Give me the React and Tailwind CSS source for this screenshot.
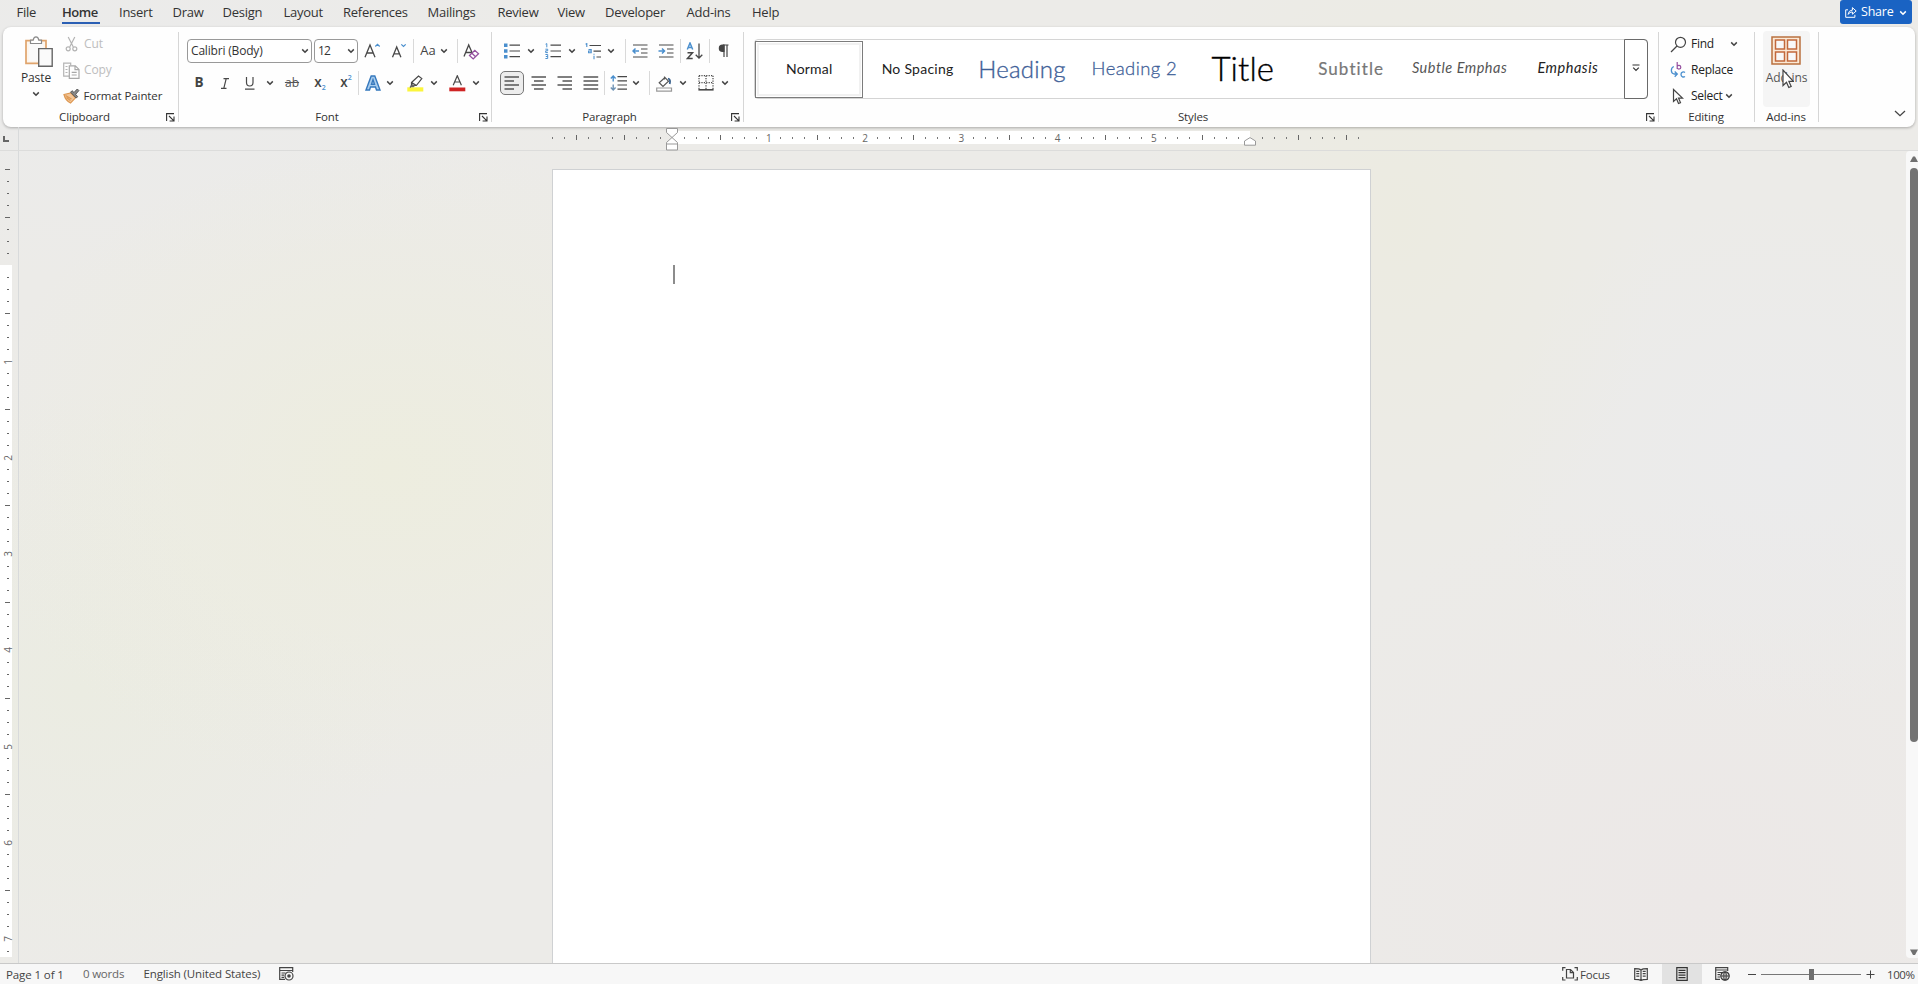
import React from "react";

const INK = "#484848";
const BLUE = "#4a8fce";

function Svg({ w, h, children, className = "" }) {
  return (
    <svg width={w} height={h} viewBox={`0 0 ${w} ${h}`} fill="none" stroke={INK} strokeWidth="1.2" className={`shrink-0 ${className}`}>
      {children}
    </svg>
  );
}

const Chev = ({ color = "#444", className = "" }) => (
  <Svg w={8} h={6} className={className}>
    <path d="M1.2 1.4 4 4.2 6.8 1.4" stroke={color} strokeWidth="1.5" />
  </Svg>
);

const Cell = ({ c = "", children }) => <div className={`flex h-6 shrink-0 items-center justify-center ${c}`}>{children}</div>;
const Sep = ({ c = "" }) => <div className={`h-6 w-px shrink-0 bg-[#d9d9d9] ${c}`} />;
const Row = ({ c = "", children }) => <div className={`flex h-8 items-center ${c}`}>{children}</div>;

const Launcher = () => (
  <Svg w={9} h={9}>
    <path d="M.6 8V.6H8M3 3l4.4 4.4M8 3.6V8H3.6" stroke="#333" strokeWidth="1.1" />
  </Svg>
);

function Group({ c, label, launcher, labelClass = "", children }) {
  return (
    <section className={`flex h-[90px] shrink-0 flex-col border-r border-[#d6d6d6] ${c}`}>
      <div className="h-[78px] shrink-0">{children}</div>
      <div className={`flex h-[14px] shrink-0 items-center ${launcher ? "pr-[3px]" : ""}`}>
        <div className={`flex-1 text-center text-[11.5px] leading-[14px] tracking-[-0.15px] text-[#333] ${labelClass}`}>{label}</div>
        {launcher && <Launcher />}
      </div>
    </section>
  );
}

const TABS = [
  ["File", "w-[45.5px]"],
  ["Home", "w-[57px]"],
  ["Insert", "w-[53.5px]"],
  ["Draw", "w-[50px]"],
  ["Design", "w-[61px]"],
  ["Layout", "w-[59.5px]"],
  ["References", "w-[84.5px]"],
  ["Mailings", "w-[70px]"],
  ["Review", "w-[60px]"],
  ["View", "w-[47.5px]"],
  ["Developer", "w-[81.5px]"],
  ["Add-ins", "w-[65.5px]"],
  ["Help", "w-[40px]"],
];

function TabBar() {
  return (
    <nav className="flex h-[27px] shrink-0 items-start justify-between pl-[16.500px] pr-[6.500px]">
      <div className="flex text-[13px] leading-[24px] tracking-[-0.25px] text-[#333]">
        {TABS.map(([name, w]) => (
          <div key={name} className={`shrink-0 whitespace-nowrap ${w}`}>
            {name === "Home" ? (
              <span className="flex h-6 w-[37.5px] flex-col border-b-2 border-[#2b5fb4] font-semibold tracking-[-0.45px]">{name}</span>
            ) : (
              name
            )}
          </div>
        ))}
      </div>
      <button className="flex h-6 w-[72px] items-center rounded-[3px] bg-[#1a63c3] pl-[5px] text-[12.5px] leading-6 tracking-[-0.2px] text-white">
        <Svg w={12} h={12}>
          <path d="M3 3.8H.7v7.5h9.2V8.8M3.2 8.4C3.5 5.6 5 4.3 7.4 4.2V1.6L11.2 5 7.4 8.2V6C5.500 6 4.300 6.700 3.200 8.400Z" stroke="#fff" strokeWidth="1" />
        </Svg>
        <span className="ml-[4.500px] mr-[5.500px]">Share</span>
        <Chev color="#fff" className="mt-px" />
      </button>
    </nav>
  );
}

function Clipboard() {
  return (
    <Group c="w-[176px]" label="Clipboard" launcher>
      <div className="flex">
        <div className="flex w-[60px] flex-col items-center pl-[6px] pt-[4px] text-[12px] text-[#333]">
          <Svg w={28} h={31} className="ml-[5px]">
            <path d="M1 4.700h20v22.600H1z" fill="#fdf6ee" stroke="#e0a46c" strokeWidth="1.700" />
            <path d="M4 7h14v18H4z" fill="#fafafa" stroke="none" />
            <path d="M5.500 7.500V4.200h2.700C8.500 1.900 9.600.8 11 .8s2.500 1.100 2.800 3.400h2.700v3.300z" fill="#fff" stroke="#8a8a8a" strokeWidth="1.200" />
            <path d="M13.700 12.600h13.500v17.600H13.700z" fill="#fafafa" stroke="#666" strokeWidth="1.400" />
          </Svg>
          <span className="mt-[3px] leading-4 tracking-[-0.1px]">Paste</span>
          <Chev className="mt-[5px]" />
        </div>
        <div className="-mt-px flex flex-col text-[11.5px] tracking-[-0.1px] text-[#333]">
          <div className="flex h-[26px] items-center text-[#bdbdbd]">
            <Svg w={17} h={16}>
              <path d="M5.200 1 10.300 11M11.800 1 6.700 11" stroke="#b4b4b4" strokeWidth="1.200" />
              <circle cx="5.200" cy="12.800" r="2" stroke="#b4b4b4" />
              <circle cx="11.800" cy="12.800" r="2" stroke="#b4b4b4" />
            </Svg>
            <span className="ml-[4px] text-[12px]">Cut</span>
          </div>
          <div className="flex h-[26px] items-center text-[#bdbdbd]">
            <Svg w={17} h={17}>
              <path d="M6 14.200H.7V1.200h7v2M2.500 4.500h2M2.500 7.500h2M2.500 10.500h2" stroke="#b4b4b4" />
              <path d="M6.300 3.800h6L16 7.400v8.900H6.300zM12 4v3.700h4M8.700 10.400h5M8.700 13h5" stroke="#a8a8a8" />
            </Svg>
            <span className="ml-[4px] text-[12px]">Copy</span>
          </div>
          <div className="flex h-[26px] items-center">
            <Svg w={17} h={16}>
              <path d="M1 6.500 8 5l4.500 4.800L7.500 15C4.500 13.500 2 10.600 1 6.500Z" fill="#f3c698" stroke="#dd9852" />
              <path d="m3.500 9.500 4 3M2.500 7.500l6 3.500" stroke="#dd9852" />
              <path d="m7.600 4.200 5.700 5.900 1.300-1.500-2-2.300L15.900 2.600 14.300 1 11 4.500 9 2.700Z" fill="#8a8a8a" stroke="#555" strokeWidth="1" />
            </Svg>
            <span className="ml-[3.500px] whitespace-nowrap">Format Painter</span>
          </div>
        </div>
      </div>
    </Group>
  );
}

function FontGroup() {
  return (
    <Group c="w-[313px]" label="Font" launcher labelClass="pr-1">
      <div className="pl-[8px] pt-[3px] text-[#444]">
        <Row>
          <div className="flex h-6 w-[125px] shrink-0 items-center justify-between rounded-[4px] border border-[#999] bg-white pl-[3px] pr-[2px] text-[12px] tracking-[-0.18px] text-[#333]">
            Calibri (Body)
            <Chev />
          </div>
          <div className="ml-[2px] flex h-6 w-[44px] shrink-0 items-center justify-between rounded-[4px] border border-[#999] bg-white pl-[3px] pr-[2px] text-[12px] tracking-[-0.8px] text-[#333]">
            12
            <Chev />
          </div>
          <Cell c="ml-[5.500px] w-[17px]">
            <Svg w={17} h={16}>
              <path d="M1 14.200 6 2l5 12.200M2.700 10h6.600" strokeWidth="1.300" />
              <path d="m11.300 3.500 2.200-2.200 2.200 2.200" stroke={BLUE} />
            </Svg>
          </Cell>
          <Cell c="ml-[10px] w-[17px]">
            <Svg w={17} h={16}>
              <path d="M1.500 14.200 5.700 4l4.200 10.200M3 10.800h5.400" strokeWidth="1.300" />
              <path d="m10.300 1.300 2.200 2.200 2.200-2.200" stroke={BLUE} />
            </Svg>
          </Cell>
          <Sep c="ml-[5px]" />
          <Cell c="ml-[5.500px] w-[18px] text-[13px]">Aa</Cell>
          <Cell c="w-[13px]"><Chev /></Cell>
          <Sep c="ml-[7px]" />
          <Cell c="ml-[5px] w-[17px]">
            <Svg w={17} h={17}>
              <path d="M1 13.500 5.700 2l3.500 8M2.700 9.500h5.700" strokeWidth="1.300" />
              <path d="m6.500 12.500 5.300-5.200 3.700 3.400-5.300 5.200zM9 10.200l3.500 3.500" fill="#fff" stroke="#95509f" strokeWidth="1.300" />
            </Svg>
          </Cell>
        </Row>
        <Row>
          <Cell c="w-6 pb-px text-[13.500px] font-bold">B</Cell>
          <Cell c="w-[28px]">
            <Svg w={8} h={11}><path d="M2.500.7H8M0 10.300h5.500M5.200.7 2.800 10.300" /></Svg>
          </Cell>
          <Cell c="w-[22px]">
            <Svg w={10} h={13}><path d="M1.500 0v5.500c0 2.300 1.200 3.500 3.200 3.500S8 7.800 8 5.500V0M0 12.200h9.500" /></Svg>
          </Cell>
          <Cell c="w-[17px]"><Chev /></Cell>
          <Cell c="w-[28px] text-[12px] tracking-[0.1px] text-[#555] line-through">ab</Cell>
          <Cell c="w-[28px]">
            <span className="pb-[2px] text-[13.500px] font-semibold leading-6">x</span>
            <span className="mt-[10px] text-[7px] font-semibold leading-4 text-[#4a8fce]">2</span>
          </Cell>
          <Cell c="w-6">
            <span className="pb-[2px] text-[13.500px] font-semibold leading-6">x</span>
            <span className="-mt-[11px] text-[7px] font-semibold leading-4 text-[#4a8fce]">2</span>
          </Cell>
          <Sep />
          <Cell c="w-[28px]">
            <Svg w={16} h={16}>
              <path d="M1 15 6.200 1h3.600L15 15h-3.500l-1-3h-5l-1 3zM6.500 9.300h3L8 4.700z" fill="#a9cdee" stroke="#3578bd" strokeWidth="1.400" />
            </Svg>
          </Cell>
          <Cell c="w-[6px]"><Chev /></Cell>
          <Cell c="ml-[14px] w-[17px]">
            <Svg w={17} h={17}>
              <path d="M.3 12.300h16v4.200H.3z" fill="#fbf53c" stroke="none" />
              <path d="m4.500 7.500 7-6.500 3.300 2.500-5.500 7H5.700l-1.900 1.300.7-1.900zM5 7.800l4 2.500" />
              <path d="M2.500 12 5.700 9l2.500 1.700-1.700 1.500z" fill="#666" stroke="none" />
            </Svg>
          </Cell>
          <Cell c="ml-[6px] w-[8px]"><Chev /></Cell>
          <Cell c="ml-[10.500px] w-[17px]">
            <Svg w={17} h={17}>
              <path d="M.3 12.500h16v3.800H.3z" fill="#cf2424" stroke="none" />
              <path d="M4.200 10.200 8.300.7l4.100 9.500M5.600 7h5.400" />
            </Svg>
          </Cell>
          <Cell c="ml-[6px] w-[8px]"><Chev /></Cell>
        </Row>
      </div>
    </Group>
  );
}

const Bars = ({ d }) => (
  <Svg w={16} h={14}><path d={d} stroke="#555" strokeWidth="1.300" /></Svg>
);

function Paragraph() {
  return (
    <Group c="w-[252px]" label="Paragraph" launcher labelClass="pr-1">
      <div className="pl-[8px] pt-[3px] text-[#444]">
        <Row>
          <Cell c="w-[24px]">
            <Svg w={16} h={16}>
              <path d="M0 .5h3.500V4H0zM0 6.200h3.500v3.500H0zM0 12h3.500v3.500H0z" fill={BLUE} stroke="none" />
              <path d="M5.500 2.200H16M5.500 8H16M5.500 13.700H16" />
            </Svg>
          </Cell>
          <Cell c="w-[13px]"><Chev /></Cell>
          <Cell c="ml-[8px] w-[16px]">
            <Svg w={16} h={16}>
              <path d="M5.500 2.200H16M5.500 8H16M5.500 13.700H16" />
              <path d="M.6 1.200 1.800.6v3.700M.4 6.200h2.300v1.600H.7v1.800h2.200M.4 11.500h2.300v4H.4M.8 13.500h1.900" stroke={BLUE} strokeWidth="1" />
            </Svg>
          </Cell>
          <Cell c="ml-[5px] w-[12px]"><Chev /></Cell>
          <Cell c="ml-[7px] w-[17px]">
            <Svg w={17} h={17}>
              <path d="M4.500 2.500H16M8.500 8.200H16M11.500 14H16" />
              <path d="M.6 1.200 1.800.6V4M3.500 6.500h2.700v3.200H3.600V8h2.600M9 10.700v1M9 12.700v3.500" stroke={BLUE} strokeWidth="1.100" />
            </Svg>
          </Cell>
          <Cell c="ml-[2px] w-[13px]"><Chev /></Cell>
          <Sep c="ml-[8px]" />
          <Cell c="ml-[5px] w-[17px]">
            <Svg w={16} h={14}>
              <path d="M1 1h14.500M9 5h6.500M9 9h6.500M1 13h14.500" />
              <path d="M1 7h6M3.500 4.500 1 7l2.500 2.500" stroke={BLUE} strokeWidth="1.500" />
            </Svg>
          </Cell>
          <Cell c="ml-[9px] w-[17px]">
            <Svg w={16} h={14}>
              <path d="M1 1h14.500M9 5h6.500M9 9h6.500M1 13h14.500" />
              <path d="M.5 7h6M4 4.500 6.500 7 4 9.500" stroke={BLUE} strokeWidth="1.500" />
            </Svg>
          </Cell>
          <Sep c="ml-[6px]" />
          <Cell c="ml-[5px] w-[18px]">
            <Svg w={18} h={18}>
              <path d="m1.300 7.500 2.700-6.500 2.700 6.500M2.200 5.500h3.600" stroke={BLUE} strokeWidth="1.500" />
              <path d="M1.500 10.700h5L1.500 16.500h5.200" strokeWidth="1.500" />
              <path d="M13 1.500v14.500M9.700 12.800 13 16l3.300-3.200" strokeWidth="1.300" />
            </Svg>
          </Cell>
          <Sep c="ml-[5px]" />
          <Cell c="ml-[8px] w-[11px]">
            <Svg w={11} h={14}>
              <path d="M5 .5h5.500v1H5z" fill="#444" stroke="none" />
              <path d="M4.500.500h2V8h-2A3.700 3.700 0 0 1 4.500.500Z" fill="#444" stroke="none" />
              <path d="M6 1v12M9 1v12" stroke="#444" />
            </Svg>
          </Cell>
        </Row>
        <Row>
          <Cell c="w-[24px] rounded-[5px] border border-[#777] bg-[#ededed]"><Bars d="M.5 1H15M.5 5H10M.5 9H15M.5 13H10" /></Cell>
          <Cell c="ml-[6.500px] w-[16px]"><Bars d="M.5 1H15M3 5H12.500M.5 9H15M3 13H12.500" /></Cell>
          <Cell c="ml-[10px] w-[16px]"><Bars d="M.5 1H15M5.500 5H15M.5 9H15M5.500 13H15" /></Cell>
          <Cell c="ml-[10px] w-[16px]"><Bars d="M.5 1H15.200M.5 5H15.200M.5 9H15.200M.5 13H15.200" /></Cell>
          <Sep c="ml-[5.500px]" />
          <Cell c="ml-[5px] w-[18px]">
            <Svg w={18} h={16}>
              <path d="M7.500 1.700h9.500M7.500 5.900h9.500M7.500 10h9.500M7.500 14.200h9.500" />
              <path d="M3.200 1v5.500M.8 3.500 3.200 1l2.400 2.500" stroke={BLUE} strokeWidth="1.400" />
              <path d="M3.200 9.500V15M.8 12.500 3.200 15l2.400-2.500" stroke="#6f93b5" strokeWidth="1.400" />
            </Svg>
          </Cell>
          <Cell c="ml-px w-[13px]"><Chev /></Cell>
          <Sep c="ml-[7px]" />
          <Cell c="ml-[6px] w-[17px]">
            <Svg w={17} h={17}>
              <path d="M.7 13h14.800v3.200H.7z" fill="#fff" stroke="#999" />
              <path d="M8.500 1.500v3M9 2.500 3.200 7.800 7 11.500l5.500-5.300z" stroke="#555" />
              <path d="M12 3.500c2 .5 2.500 2.500 1.700 5.500" stroke="#38608c" strokeWidth="1.800" />
            </Svg>
          </Cell>
          <Cell c="ml-[5px] w-[10px]"><Chev /></Cell>
          <Cell c="ml-[9px] w-[17px]">
            <Svg w={16} h={16}>
              <path d="M1 .7h14M1 7.700h14" strokeDasharray="1.200 1.200" />
              <path d="M1 .7V14M8 .7V14M15 .7V14" strokeDasharray="1.200 1.200" />
              <path d="M.4 14.800h15.200" strokeWidth="1.600" />
            </Svg>
          </Cell>
          <Cell c="ml-[6px] w-[10px]"><Chev /></Cell>
        </Row>
      </div>
    </Group>
  );
}

const STYLES = [
  ["Normal", "text-[14px] text-[#222] tracking-[0.2px]"],
  ["No Spacing", "text-[14px] text-[#222] tracking-[0.25px]"],
  ["Heading", "text-[24px] font-light text-[#3f5f98] tracking-[0.2px] -ml-[8px] [-webkit-text-stroke:0.35px_#3f5f98]"],
  ["Heading 2", "text-[18.500px] font-light text-[#3f5f98] tracking-[0.4px] [-webkit-text-stroke:0.3px_#3f5f98]"],
  ["Title", "text-[33px] font-light text-black tracking-[0.1px] [-webkit-text-stroke:0.35px_#000]"],
  ["Subtitle", "text-[17px] text-[#777] tracking-[1.1px] [-webkit-text-stroke:0.2px_#777]"],
  ["Subtle Emphas", "text-[14.500px] italic text-[#555] tracking-[0.5px]"],
  ["Emphasis", "text-[14.500px] italic text-[#222] tracking-[0.55px]"],
];

function Styles() {
  return (
    <Group c="w-[915px]" label="Styles" launcher labelClass="pr-1">
      <div className="pl-[10px] pt-[7px]">
        <div className="flex h-[60px] w-[894px] rounded-[4px] border border-[#d4d4d4] bg-white">
          <div className="flex flex-1 items-center">
            {STYLES.map(([name, c], i) => (
              <div
                key={name}
                className={`flex h-[57px] w-[108.400px] shrink-0 items-center justify-center whitespace-nowrap font-['Lato'] leading-none ${
                  i === 0 ? "border-[1.500px] border-[#7c7c7c] outline -outline-offset-4 outline-2 outline-[#f1f1f1]" : ""
                }`}
              >
                <span className={`pb-px ${c}`}>{name}</span>
              </div>
            ))}
          </div>
          <div className="-my-px -mr-px flex w-6 items-center justify-center rounded-r-[4px] border border-[#6a6a6a]">
            <Svg w={8} h={8} className="-mt-[2px]">
              <path d="M.5 1h7M1.200 3.700 4 6.500l2.800-2.800" stroke="#333" />
            </Svg>
          </div>
        </div>
      </div>
    </Group>
  );
}

function Editing() {
  return (
    <Group c="w-[96px]" label="Editing" labelClass="pr-px">
      <div className="-mt-px pl-[11px] text-[12px] tracking-[-0.25px] text-[#222]">
        <div className="flex h-[26px] items-center">
          <Svg w={17} h={17}>
            <circle cx="10.500" cy="6.300" r="5" stroke="#444" />
            <path d="M7 10 1 16" stroke="#444" />
          </Svg>
          <span className="ml-[4px] w-[38px]">Find</span>
          <Chev className="ml-[1px]" />
        </div>
        <div className="flex h-[26px] items-center">
          <Svg w={17} h={18}>
            <path d="M7.200 1v7M7.200 5.200c.8-1.300 3.600-1.300 3.600 1s-2.800 2.300-3.600.8" stroke="#95509f" />
            <path d="M15 11.500c-1.500-1.100-4-.5-4 2s2.500 3 4 2" stroke={BLUE} strokeWidth="1.300" />
            <path d="M3.800 5.500C.5 7 .5 12 4 13h3M4.700 10.500 7.300 13l-2.600 2.700" stroke={BLUE} strokeWidth="1.300" />
          </Svg>
          <span className="ml-[4px]">Replace</span>
        </div>
        <div className="flex h-[26px] items-center">
          <Svg w={17} h={17}>
            <path d="M3.500 1.500v12l3-2.700 2 4.700 2-.9-2-4.500h4z" stroke="#444" />
          </Svg>
          <span className="ml-[4px]">Select</span>
          <Chev className="ml-[2px]" />
        </div>
      </div>
    </Group>
  );
}

function AddIns() {
  return (
    <Group c="w-[64px]" label="Add-ins" labelClass="pr-px">
      <div className="relative -mt-px ml-[8px] flex h-[76px] w-[47px] flex-col items-center rounded-[4px] bg-[#f5f5f5] pt-[5px]">
        <Svg w={30} h={29} className="-ml-px">
          <path d="M1 1h28v27H1z" fill="#fbe9d6" stroke="#b9703f" strokeWidth="1.500" />
          <path d="M4.500 4h9v9h-9zM16.500 4h9v9h-9zM4.500 16h9v9h-9zM16.500 16h9v9h-9z" fill="#f8f8f8" stroke="#c2683b" strokeWidth="1.500" />
        </Svg>
        <span className="mt-[5px] whitespace-nowrap text-[12px] leading-4 tracking-[-0.1px] text-[#555]">Add-ins</span>
        <svg width="12" height="20" viewBox="0 0 12 20" className="absolute left-[18.500px] top-[37.500px]">
          <path d="M1 1v15.500l3.500-3.300 2.300 5.300 2.400-1.100-2.300-5h4.500z" fill="#fff" stroke="#444" strokeWidth="1.200" />
        </svg>
      </div>
    </Group>
  );
}

const H_TICKS = Array.from({ length: 68 }, (_, i) => i - 10);
const V_TICKS = Array.from({ length: 66 }, (_, i) => i - 8);

const hFill = (n) => {
  if (n === 0) return "bg-linear-to-r from-transparent from-50% to-white to-50%";
  if (n === 48) return "bg-linear-to-r from-white from-50% to-transparent to-50%";
  return n > 0 && n < 48 ? "bg-white" : "";
};

function HorizontalRuler() {
  return (
    <div className="flex h-[24px] shrink-0 border-b border-[#dcdcdb]">
      <div className="flex w-[19px] shrink-0 items-center border-r border-[#d8dadb] pl-[3px]">
        <Svg w={6} h={6}><path d="M1 0v5h5" stroke="#666" strokeWidth="2" /></Svg>
      </div>
      <div className="relative ml-[527.300px] mt-[4px] flex h-[13px]">
        {H_TICKS.map((n) => (
          <div key={n} className={`flex w-[12.040px] shrink-0 items-center justify-center ${hFill(n)}`}>
            {n > 0 && n < 48 && n % 8 === 0 ? (
              <span className="text-[10px] leading-none text-[#666]">{n / 8}</span>
            ) : n === 0 || n === 48 ? null : n % 4 === 0 ? (
              <i className="h-[5px] w-px bg-[#666]" />
            ) : (
              <i className="h-[2px] w-px bg-[#777]" />
            )}
          </div>
        ))}
        <svg width="12" height="23" viewBox="0 0 12 23" fill="#fff" stroke="#999" className="absolute left-[119.700px] -top-[3px]">
          <path d="M.5.500h11v4L6 9.500l5.500 5v7.500H.5v-7.500l5.500-5-5.500-5zM.5 16h11" />
        </svg>
        <svg width="12" height="9" viewBox="0 0 12 9" fill="#fff" stroke="#999" className="absolute left-[697.900px] top-[6px]">
          <path d="M.5 8.200V4L6 .6 11.500 4v4.200z" />
        </svg>
      </div>
    </div>
  );
}

function VerticalRuler() {
  return (
    <div className="flex w-[19px] shrink-0 flex-col overflow-hidden border-r border-[#d8dadb] pt-[12px]">
      {V_TICKS.map((n) => (
        <div
          key={n}
          className={`flex h-[12.040px] w-3 shrink-0 items-center justify-center pl-[3px] ${
            n === 0 ? "bg-linear-to-b from-transparent from-50% to-white to-50%" : n > 0 ? "bg-white" : ""
          }`}
        >
          {n > 0 && n % 8 === 0 ? (
            <span className="-rotate-90 text-[10px] leading-none text-[#666]">{n / 8}</span>
          ) : n === 0 ? null : n % 4 === 0 ? (
            <i className="h-px w-[5px] bg-[#666]" />
          ) : (
            <i className="h-px w-[2px] bg-[#666]" />
          )}
        </div>
      ))}
    </div>
  );
}

function Scrollbar() {
  return (
    <div className="mb-[5px] flex w-3 shrink-0 flex-col items-end justify-between rounded-l-[4px] bg-[#f8f8f8]">
      <div className="flex flex-col">
        <svg width="8" height="17" viewBox="0 0 8 17"><path d="M0 11 3 5.500h2L8 11z" fill="#707070" /></svg>
        <div className="h-[574px] w-2 rounded-[4px] bg-[#737373]" />
      </div>
      <svg width="8" height="11" viewBox="0 0 8 11"><path d="M0 2.500h8L5 8H3z" fill="#707070" /></svg>
    </div>
  );
}

function StatusBar() {
  return (
    <footer className="flex h-[21px] shrink-0 items-center border-t border-[#c9c9c9] bg-[#f7f7f7] text-[11.500px] leading-5 tracking-[-0.2px] text-[#444]">
      <span className="ml-[6px] w-[77px] pt-px tracking-[-0.100px]">Page 1 of 1</span>
      <span className="w-[60.500px] text-[#666]">0 words</span>
      <span className="w-[135px] tracking-[-0.120px]">English (United States)</span>
      <Svg w={15} h={14}>
        <path d="M6 12.300H.7V.7h13V5M.7 3.500h13M2.500 6h4M2.500 8.200h2.500M2.500 10.300h2.500" stroke="#444" />
        <circle cx="10" cy="9" r="4" fill="#f7f7f7" stroke="#444" />
        <circle cx="10" cy="9" r="1.800" fill="#444" stroke="none" />
      </Svg>
      <div className="flex-1" />
      <Svg w={16} h={14}>
        <path d="M3.500.7H.7v3M.7 10v3h2.800M12.500.7h2.800v3M15.300 10v3h-2.800" stroke="#444" />
        <path d="M4.500 2.500h4l3 3V11h-7zM8.300 2.700v3h3" stroke="#444" />
      </Svg>
      <span className="ml-[2px] w-[54px] pt-px">Focus</span>
      <Svg w={14} h={13}>
        <path d="M7 2C5.500.8 3 .7.7.7v10.600c2.300 0 4.800.1 6.300 1.200 1.500-1.100 4-1.200 6.300-1.200V.7C11 .7 8.500.8 7 2zm0 0v10.500M2.300 3.300h3M2.300 5.700h3M2.300 8.200h3M8.700 3.300h3M8.700 5.700h3M8.700 8.200h3" stroke="#444" />
      </Svg>
      <div className="ml-[13.500px] flex h-5 w-10 items-center justify-center bg-[#e2e2e2]">
        <Svg w={12} h={14}>
          <path d="M.8.700h10.400v12.600H.8zM2.500 3.300h7M2.500 5.700h7M2.500 8.200h7M2.500 10.600h7" stroke="#333" />
        </Svg>
      </div>
      <Svg w={15} h={14} className="ml-[13px]">
        <path d="M5 12.300H.7V.7h12V4M.7 3h12M2.500 5.500h5M2.500 7.700h2.500M2.500 10h2.500" stroke="#444" />
        <circle cx="10" cy="9" r="4.200" fill="#f7f7f7" stroke="#333" />
        <path d="M5.800 9h8.400M10 4.800v8.400M10 4.800c-2.500 2.500-2.500 6 0 8.400M10 4.800c2.500 2.500 2.500 6 0 8.400" stroke="#333" strokeWidth=".9" />
      </Svg>
      <i className="ml-[18.500px] h-px w-2 bg-[#444]" />
      <div className="ml-[5px] flex h-3 w-[100px] items-center">
        <i className="h-px w-[48px] bg-[#777]" />
        <i className="h-[11px] w-[5px] bg-[#6e6e6e]" />
        <i className="h-px flex-1 bg-[#777]" />
      </div>
      <Svg w={9} h={9} className="ml-[5px]"><path d="M.5 4.500h8M4.500.5v8" stroke="#444" strokeWidth="1" /></Svg>
      <span className="ml-[12px] w-[31px] pt-px tracking-[-0.400px]">100%</span>
    </footer>
  );
}

export default function App() {
  return (
    <div className="flex h-[984px] w-[1918px] flex-col overflow-hidden bg-[#ecebe8] bg-[radial-gradient(ellipse_420px_330px_at_390px_470px,#ededdf_0%,transparent_100%),radial-gradient(ellipse_330px_300px_at_80px_690px,#ebece2_0%,transparent_100%),radial-gradient(ellipse_260px_360px_at_1400px_220px,#ecebe1_0%,transparent_100%),radial-gradient(ellipse_300px_260px_at_1780px_460px,#ebebec_0%,transparent_100%),radial-gradient(ellipse_500px_400px_at_1700px_900px,#ece8e7_0%,transparent_100%),radial-gradient(ellipse_500px_200px_at_120px_80px,#ebebeb_0%,transparent_100%)] font-['Open_Sans','Noto_Sans',sans-serif]">
      <TabBar />
      <header className="mx-[3px] flex h-[100px] shrink-0 items-start rounded-[8px] bg-[#fefefe] pt-[5px] shadow-[0_1px_3px_rgba(0,0,0,0.28)]">
        <Clipboard />
        <FontGroup />
        <Paragraph />
        <Styles />
        <Editing />
        <AddIns />
        <div className="flex h-[90px] flex-1 items-end justify-end pb-[5px] pr-[9px]">
          <Svg w={12} h={7}><path d="m1 1 5 4.700L11 1" stroke="#444" strokeWidth="1.300" /></Svg>
        </div>
      </header>
      <HorizontalRuler />
      <div className="-mt-px flex min-h-0 flex-1 pt-px">
        <VerticalRuler />
        <main className="flex min-w-0 flex-1 justify-start pl-[533px] pt-[18px]">
          <div className="w-[819px] border border-b-0 border-[#cfd1d3] bg-white pl-[120px] pt-[95px]">
            <i className="block h-[19px] w-[1.500px] bg-[#8c8c8c]" />
          </div>
        </main>
        <Scrollbar />
      </div>
      <StatusBar />
    </div>
  );
}
